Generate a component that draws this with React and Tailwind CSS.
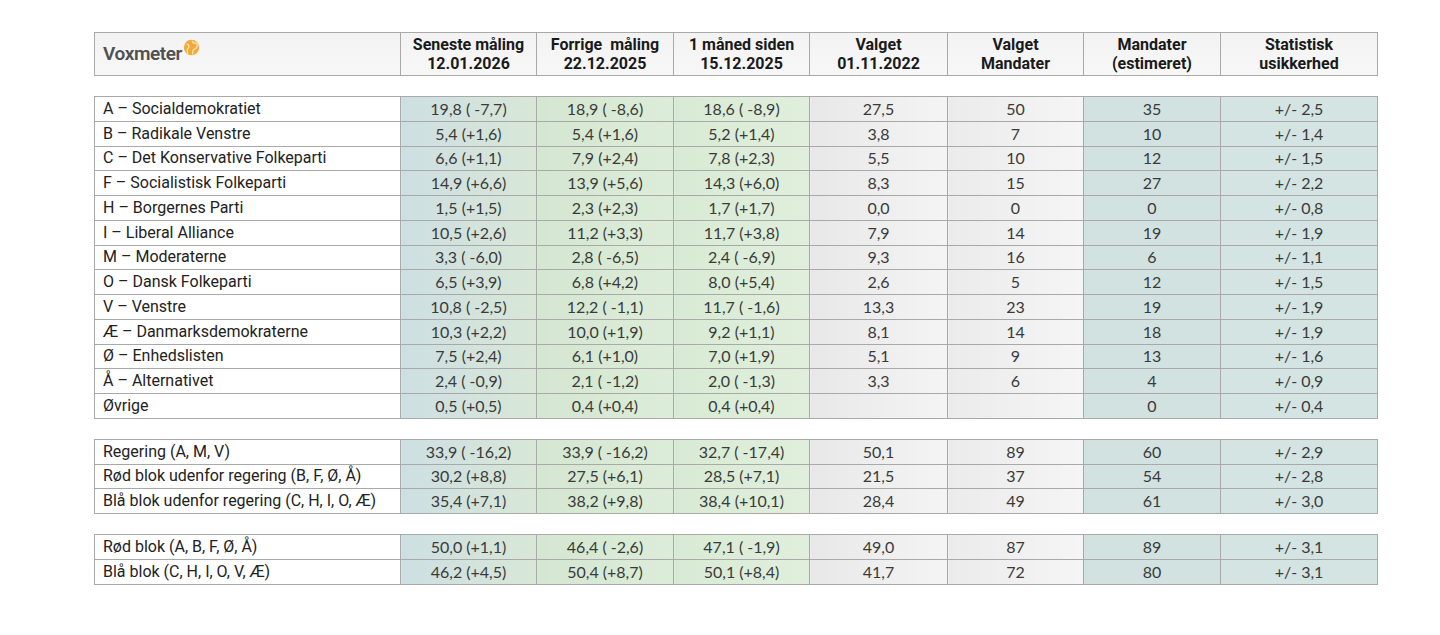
import React from 'react';

const cols = ['w-[306px]', 'w-[136px]', 'w-[137px]', 'w-[136px]', 'w-[138px]', 'w-[136px]', 'w-[137px]', 'w-[157px]'];

// bakgrund per kolonne (label-kolonnen først)
const cellBg = [
    'bg-white',
    'bg-linear-to-r from-[#cddfe2] to-[#d8e7d7]',
    'bg-linear-to-r from-[#d4e7d1] to-[#dcecd8]',
    'bg-linear-to-r from-[#d8ead4] to-[#e0efdc]',
    'bg-linear-to-r from-[#e8e8e8] to-[#f4f4f4]',
    'bg-linear-to-r from-[#ebebeb] to-[#f5f5f5]',
    'bg-[#d2e2e1]',
    'bg-[#d4e4e3]',
];

const parties = [
    ['A – Socialdemokratiet', '19,8 ( -7,7)', '18,9 ( -8,6)', '18,6 ( -8,9)', '27,5', '50', '35', '+/- 2,5'],
    ['B – Radikale Venstre', '5,4 (+1,6)', '5,4 (+1,6)', '5,2 (+1,4)', '3,8', '7', '10', '+/- 1,4'],
    ['C – Det Konservative Folkeparti', '6,6 (+1,1)', '7,9 (+2,4)', '7,8 (+2,3)', '5,5', '10', '12', '+/- 1,5'],
    ['F – Socialistisk Folkeparti', '14,9 (+6,6)', '13,9 (+5,6)', '14,3 (+6,0)', '8,3', '15', '27', '+/- 2,2'],
    ['H – Borgernes Parti', '1,5 (+1,5)', '2,3 (+2,3)', '1,7 (+1,7)', '0,0', '0', '0', '+/- 0,8'],
    ['I – Liberal Alliance', '10,5 (+2,6)', '11,2 (+3,3)', '11,7 (+3,8)', '7,9', '14', '19', '+/- 1,9'],
    ['M – Moderaterne', '3,3 ( -6,0)', '2,8 ( -6,5)', '2,4 ( -6,9)', '9,3', '16', '6', '+/- 1,1'],
    ['O – Dansk Folkeparti', '6,5 (+3,9)', '6,8 (+4,2)', '8,0 (+5,4)', '2,6', '5', '12', '+/- 1,5'],
    ['V – Venstre', '10,8 ( -2,5)', '12,2 ( -1,1)', '11,7 ( -1,6)', '13,3', '23', '19', '+/- 1,9'],
    ['Æ – Danmarksdemokraterne', '10,3 (+2,2)', '10,0 (+1,9)', '9,2 (+1,1)', '8,1', '14', '18', '+/- 1,9'],
    ['Ø – Enhedslisten', '7,5 (+2,4)', '6,1 (+1,0)', '7,0 (+1,9)', '5,1', '9', '13', '+/- 1,6'],
    ['Å – Alternativet', '2,4 ( -0,9)', '2,1 ( -1,2)', '2,0 ( -1,3)', '3,3', '6', '4', '+/- 0,9'],
    ['Øvrige', '0,5 (+0,5)', '0,4 (+0,4)', '0,4 (+0,4)', '', '', '0', '+/- 0,4'],
];

const government = [
    ['Regering (A, M, V)', '33,9 ( -16,2)', '33,9 ( -16,2)', '32,7 ( -17,4)', '50,1', '89', '60', '+/- 2,9'],
    ['Rød blok udenfor regering (B, F, Ø, Å)', '30,2 (+8,8)', '27,5 (+6,1)', '28,5 (+7,1)', '21,5', '37', '54', '+/- 2,8'],
    ['Blå blok udenfor regering (C, H, I, O, Æ)', '35,4 (+7,1)', '38,2 (+9,8)', '38,4 (+10,1)', '28,4', '49', '61', '+/- 3,0'],
];

const blocks = [
    ['Rød blok (A, B, F, Ø, Å)', '50,0 (+1,1)', '46,4 ( -2,6)', '47,1 ( -1,9)', '49,0', '87', '89', '+/- 3,1'],
    ['Blå blok (C, H, I, O, V, Æ)', '46,2 (+4,5)', '50,4 (+8,7)', '50,1 (+8,4)', '41,7', '72', '80', '+/- 3,1'],
];

const headers = [
    ['Seneste måling', '12.01.2026'],
    ['Forrige  måling', '22.12.2025'],
    ['1 måned siden', '15.12.2025'],
    ['Valget', '01.11.2022'],
    ['Valget', 'Mandater'],
    ['Mandater', '(estimeret)'],
    ['Statistisk', 'usikkerhed'],
];

const Globe = () => (
    <svg width="17" height="17" viewBox="0 0 20 20" className="-mt-[13px] ml-[1px]">
        <circle cx="10" cy="10" r="9" fill="#f2a93b" />
        <path d="M4 6c2 0 3 1 3 3s-2 2-2 4 1 3 0 4" fill="none" stroke="#fde3a7" strokeWidth="1.6" />
        <path d="M11 2c0 2 2 3 4 3s2 3 1 5-3 1-4 3 0 4-1 5" fill="none" stroke="#fde3a7" strokeWidth="1.6" />
    </svg>
);

const Colgroup = () => (
    <colgroup>
        {cols.map((c, i) => (
            <col key={i} className={c} />
        ))}
    </colgroup>
);

const Section = ({ rows }) => (
    <table className="table-fixed border-collapse mt-[20px] w-[1283px] border border-[#9e9e9e]">
        <Colgroup />
        <tbody>
            {rows.map((r, i) => (
                <tr key={i} className="h-[24.75px]">
                    {r.map((v, j) =>
                        j === 0 ? (
                            <td
                                key={j}
                                className="border border-[#a9a9a9] bg-white pl-[8px] text-[16px] text-[#222] font-['Roboto',sans-serif] leading-none whitespace-nowrap"
                            >
                                {v}
                            </td>
                        ) : (
                            <td
                                key={j}
                                className={`border border-[#a9a9a9] ${cellBg[j]} text-center text-[16px] text-[#3a3a3a] font-['Lato',sans-serif] leading-none whitespace-pre`}
                            >
                                {v}
                            </td>
                        )
                    )}
                </tr>
            ))}
        </tbody>
    </table>
);

export default function App() {
    return (
        <div className="w-[1440px] h-[635px] bg-white pl-[94px] pt-[32px]">
            <table className="table-fixed border-collapse w-[1283px] border border-[#9e9e9e]">
                <Colgroup />
                <thead>
                    <tr className="h-[43px] bg-linear-to-b from-[#f3f3f3] to-[#f7f7f7]">
                        <th className="border border-[#a9a9a9] pl-[8px] text-left align-middle">
                            <div className="flex items-center">
                                <span className="font-['Roboto',sans-serif] font-semibold text-[19px] text-[#505050] tracking-[-0.4px]">
                                    Voxmeter
                                </span>
                                <Globe />
                            </div>
                        </th>
                        {headers.map((h, i) => (
                            <th
                                key={i}
                                className="border border-[#a9a9a9] text-center font-['Roboto',sans-serif] font-bold text-[16px] leading-[19px] text-[#1a1a1a] whitespace-pre"
                            >
                                {h[0]}
                                <br />
                                {h[1]}
                            </th>
                        ))}
                    </tr>
                </thead>
            </table>
            <Section rows={parties} />
            <Section rows={government} />
            <Section rows={blocks} />
        </div>
    );
}
